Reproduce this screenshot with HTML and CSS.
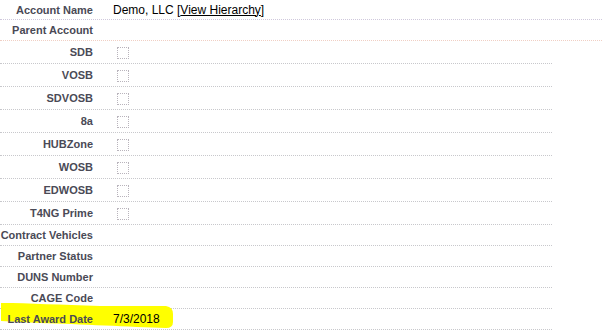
FILE: index.html
```html
<!DOCTYPE html>
<html lang="en">
<head>
  <meta charset="UTF-8">
  <title>Account Detail</title>
  <link rel="stylesheet" href="styles.css">
</head>
<body>
<div class="detail">
  <div class="row row-top wide">
    <div class="label">Account Name</div>
    <div class="data">Demo, LLC [<a href="#">View Hierarchy</a>]</div>
  </div>
  <div class="row wide">
    <div class="label">Parent Account</div>
    <div class="data"></div>
  </div>
  <div class="row row-check">
    <div class="label">SDB</div>
    <div class="data"><span class="checkbox"></span></div>
  </div>
  <div class="row row-check">
    <div class="label">VOSB</div>
    <div class="data"><span class="checkbox"></span></div>
  </div>
  <div class="row row-check">
    <div class="label">SDVOSB</div>
    <div class="data"><span class="checkbox"></span></div>
  </div>
  <div class="row row-check">
    <div class="label">8a</div>
    <div class="data"><span class="checkbox"></span></div>
  </div>
  <div class="row row-check">
    <div class="label">HUBZone</div>
    <div class="data"><span class="checkbox"></span></div>
  </div>
  <div class="row row-check">
    <div class="label">WOSB</div>
    <div class="data"><span class="checkbox"></span></div>
  </div>
  <div class="row row-check">
    <div class="label">EDWOSB</div>
    <div class="data"><span class="checkbox"></span></div>
  </div>
  <div class="row row-check">
    <div class="label">T4NG Prime</div>
    <div class="data"><span class="checkbox"></span></div>
  </div>
  <div class="row">
    <div class="label">Contract Vehicles</div>
    <div class="data"></div>
  </div>
  <div class="row">
    <div class="label">Partner Status</div>
    <div class="data"></div>
  </div>
  <div class="row">
    <div class="label">DUNS Number</div>
    <div class="data"></div>
  </div>
  <div class="row">
    <div class="label">CAGE Code</div>
    <div class="data"></div>
  </div>
  <div class="row marked">
    <svg class="marker" viewBox="0 0 176 30" width="176" height="30">
      <path d="M1,1 C30,1 60,3 100,4 L166,4 Q173,5 173,12 L173,20 Q173,26 166,26 C130,25 80,22 40,21 L1,19 Z"/>
    </svg>
    <div class="label">Last Award Date</div>
    <div class="data">7/3/2018</div>
  </div>
</div>
</body>
</html>
```

FILE: styles.css
```css
body {
  margin: 0;
  font-family: "Liberation Sans", Arial, sans-serif;
  font-size: 12px;
  color: #000;
  background: #fff;
}

.detail {
  width: 602px;
}

.row {
  display: flex;
  align-items: center;
  width: 552px;
  height: 20px;
  border-bottom: 1px dotted #c8c8cc;
}

.row.wide {
  width: 602px;
}

.row-top {
  height: 19px;
  border-bottom-color: #cfc8dc;
}

.row-top + .row {
  border-bottom-color: #f0cfc4;
}

.row-check {
  height: 22px;
}

.label {
  width: 93px;
  padding-right: 20px;
  text-align: right;
  font-size: 11px;
  font-weight: bold;
  color: #4a4a56;
  white-space: nowrap;
}

.data {
  flex: 1;
}

.data a {
  color: #000;
  text-decoration: underline;
}

.checkbox {
  display: block;
  width: 10px;
  height: 10px;
  margin: 1px 0 0 4px;
  border: 1px dotted #b9b4bc;
}

/* yellow marker over the last row */
.marked {
  position: relative;
}

.marker {
  position: absolute;
  left: 0;
  top: -7px;
}

.marker path {
  fill: #ffff00;
}

.marked .label,
.marked .data {
  position: relative;
}
```
